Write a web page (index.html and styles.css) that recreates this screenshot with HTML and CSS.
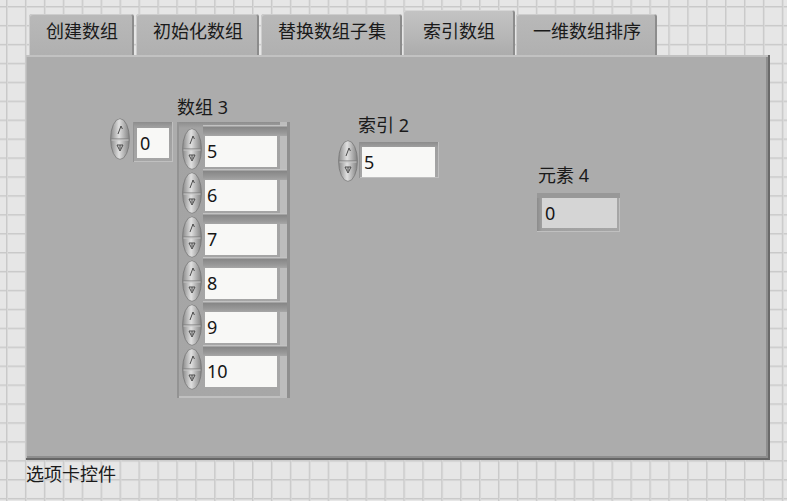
FILE: index.html
```html
<!DOCTYPE html>
<html lang="zh">
<head>
<meta charset="utf-8">
<title>选项卡控件</title>
<link rel="stylesheet" href="styles.css">
</head>
<body>
<svg class="defs" width="0" height="0" aria-hidden="true">
  <defs>
    <linearGradient id="sg" x1="0" x2="1" y1="0" y2="0">
      <stop offset="0" stop-color="#8a8a8a"/>
      <stop offset="0.45" stop-color="#e0e0e0"/>
      <stop offset="1" stop-color="#828282"/>
    </linearGradient>
    <symbol id="spin" viewBox="0 0 20 42">
      <ellipse cx="10" cy="21" rx="9.4" ry="20.4" fill="url(#sg)" stroke="#777" stroke-width="0.8"/>
      <line x1="1.2" y1="21" x2="18.8" y2="21" stroke="#7a7a7a" stroke-width="1"/>
      <line x1="1.5" y1="22" x2="18.5" y2="22" stroke="#c8c8c8" stroke-width="1"/>
      <path d="M8 16 L11 8 L12.4 11" fill="none" stroke="#4a4a4a" stroke-width="1"/>
      <path d="M7 27 L13 27 L10 33 Z M10 27 L10 31" fill="none" stroke="#4a4a4a" stroke-width="1"/>
    </symbol>
  </defs>
</svg>
<div class="page">
  <div class="tabs">
    <div class="tab">创建数组</div>
    <div class="tab">初始化数组</div>
    <div class="tab">替换数组子集</div>
    <div class="tab active">索引数组</div>
    <div class="tab">一维数组排序</div>
  </div>
  <div class="panel">
    <div class="grp grp-array">
      <div class="lbl lbl-array">数组 3</div>
      <div class="row">
        <svg class="spin" viewBox="0 0 20 42"><use href="#spin"/></svg>
        <div class="frame idx"><div class="val">0</div></div>
        <div class="array">
          <div class="cell"><svg class="spin" viewBox="0 0 20 42"><use href="#spin"/></svg><div class="slot"><div class="band"></div><div class="val">5</div></div></div>
          <div class="cell"><svg class="spin" viewBox="0 0 20 42"><use href="#spin"/></svg><div class="slot"><div class="band"></div><div class="val">6</div></div></div>
          <div class="cell"><svg class="spin" viewBox="0 0 20 42"><use href="#spin"/></svg><div class="slot"><div class="band"></div><div class="val">7</div></div></div>
          <div class="cell"><svg class="spin" viewBox="0 0 20 42"><use href="#spin"/></svg><div class="slot"><div class="band"></div><div class="val">8</div></div></div>
          <div class="cell"><svg class="spin" viewBox="0 0 20 42"><use href="#spin"/></svg><div class="slot"><div class="band"></div><div class="val">9</div></div></div>
          <div class="cell"><svg class="spin" viewBox="0 0 20 42"><use href="#spin"/></svg><div class="slot"><div class="band"></div><div class="val">10</div></div></div>
        </div>
      </div>
    </div>
    <div class="grp grp-index">
      <div class="lbl lbl-index">索引 2</div>
      <div class="row">
        <svg class="spin" viewBox="0 0 20 42"><use href="#spin"/></svg>
        <div class="frame num"><div class="val">5</div></div>
      </div>
    </div>
    <div class="grp grp-elem">
      <div class="lbl lbl-elem">元素 4</div>
      <div class="frame ind"><div class="val">0</div></div>
    </div>
  </div>
  <div class="caption">选项卡控件</div>
</div>
</body>
</html>
```
FILE: styles.css
```css
html, body {
  margin: 0;
  padding: 0;
}
body {
  width: 787px;
  height: 501px;
  overflow: hidden;
  background-color: #e6e6e6;
  background-image:
    linear-gradient(to right, #c9c9c9 0, #c9c9c9 1px, #d8d8d8 1px, #d8d8d8 2px, transparent 2px),
    linear-gradient(to bottom, #c9c9c9 0, #c9c9c9 1px, #d8d8d8 1px, #d8d8d8 2px, transparent 2px);
  background-size: 18.93px 18.93px;
  background-position: 6px 6px;
  font-family: "Noto Sans", "Noto Sans CJK SC", sans-serif;
  color: #161616;
}
.defs {
  display: block;
  width: 0;
  height: 0;
  overflow: hidden;
}
.page {
  padding: 10px 0 0 26px;
}
.tabs {
  display: flex;
  align-items: flex-end;
  height: 45px;
  padding-left: 3px;
  gap: 2px;
}
.tab {
  box-sizing: border-box;
  height: 41px;
  padding: 6px 16px 0 17px;
  font-size: 18px;
  line-height: 22px;
  background: linear-gradient(#b9b9b9, #b0b0b0);
  border-radius: 3px 3px 0 0;
  box-shadow: inset 1px 1px #cdcdcd, inset -2px 0 #8c8c8c;
  color: #1a1a1a;
}
.tab.active {
  height: 45px;
  padding: 10px 20px 0 20px;
  margin: 0 -1px;
  background: linear-gradient(#c4c4c4, #b6b6b6 60%, #acacac);
  box-shadow: inset 1px 1px #d6d6d6, inset -2px 0 #8c8c8c;
  position: relative;
  z-index: 1;
}
.panel {
  box-sizing: border-box;
  width: 744px;
  height: 405px;
  background: #acacac;
  border-right: 2px solid #6a6a6a;
  border-bottom: 2px solid #666;
  box-shadow: inset 0 2px #c2c2c2, inset 1px 0 #bcbcbc, inset -2px -2px #8e8e8e;
  display: flex;
  align-items: flex-start;
  padding-left: 84px;
}
.caption {
  margin-top: 3px;
  font-size: 18px;
  line-height: 22px;
  color: #1a1a1a;
}
.grp {
  display: flex;
  flex-direction: column;
  align-items: flex-start;
}
.lbl {
  font-size: 18px;
  line-height: 20px;
  color: #1a1a1a;
  white-space: nowrap;
}
.row {
  display: flex;
  align-items: flex-start;
}
.spin {
  display: block;
  width: 20px;
  height: 42px;
  flex: none;
}
.val {
  font-size: 18px;
  line-height: 30px;
  background: #f8f8f6;
  padding-left: 3px;
  box-sizing: border-box;
  height: 100%;
}
.frame {
  box-sizing: border-box;
  background: linear-gradient(#8c8c8c, #9f9f9f 5px, #a6a6a6);
  box-shadow: inset 1px 0 #939393, inset -1px -1px #c0c0c0;
}

/* array group */
.grp-array {
  margin-top: 42px;
}
.lbl-array {
  margin-left: 67px;
  margin-bottom: 1px;
}
.idx {
  margin-left: 3px;
  margin-top: 4px;
  width: 40px;
  height: 40px;
  padding: 6px 4px 4px 4px;
}
.array {
  box-sizing: border-box;
  margin-left: 4px;
  margin-top: 4px;
  width: 113px;
  height: 276px;
  padding: 3px 13px 9px 5px;
  background: linear-gradient(#8e8e8e, #a3a3a3 6px, #a7a7a7);
  box-shadow: inset 2px 0 #939393, inset -3px 0 #8f8f8f, inset -10px 0 #bdbdbd, inset 0 -2px #c0c0c0;
}
.cell {
  display: flex;
  height: 44px;
}
.cell .spin {
  margin-top: 3px;
  position: relative;
  z-index: 1;
}
.slot {
  margin-left: 1px;
  display: flex;
  flex-direction: column;
}
.band {
  height: 11px;
  width: 84px;
  background: linear-gradient(#c2c2c2 0, #c2c2c2 1px, #868686 2px, #999 8px, #a6a6a6 11px);
}
.slot .val {
  margin-left: 2px;
  width: 72px;
  height: 31px;
  line-height: 31px;
  flex: none;
  padding-left: 2px;
}

/* index group */
.grp-index {
  margin-left: 48px;
  margin-top: 60px;
}
.lbl-index {
  margin-left: 20px;
  margin-bottom: 5px;
}
.num {
  margin-left: 1px;
  margin-top: 2px;
  width: 80px;
  height: 36px;
  padding: 5px 4px 1px 3px;
}
.num .val {
  padding-left: 2px;
}

/* element indicator */
.grp-elem {
  margin-left: 98px;
  margin-top: 110px;
}
.lbl-elem {
  margin-left: 1px;
  margin-bottom: 8px;
}
.ind {
  width: 83px;
  height: 39px;
  padding: 5px 3px 4px 5px;
  background: linear-gradient(to right, #8c8c8c, #a0a0a0 5px, #a6a6a6);
  box-shadow: inset 0 5px #989898, inset -1px -1px #c0c0c0;
}
.ind .val {
  background: #d5d5d5;
  line-height: 30px;
}
```
